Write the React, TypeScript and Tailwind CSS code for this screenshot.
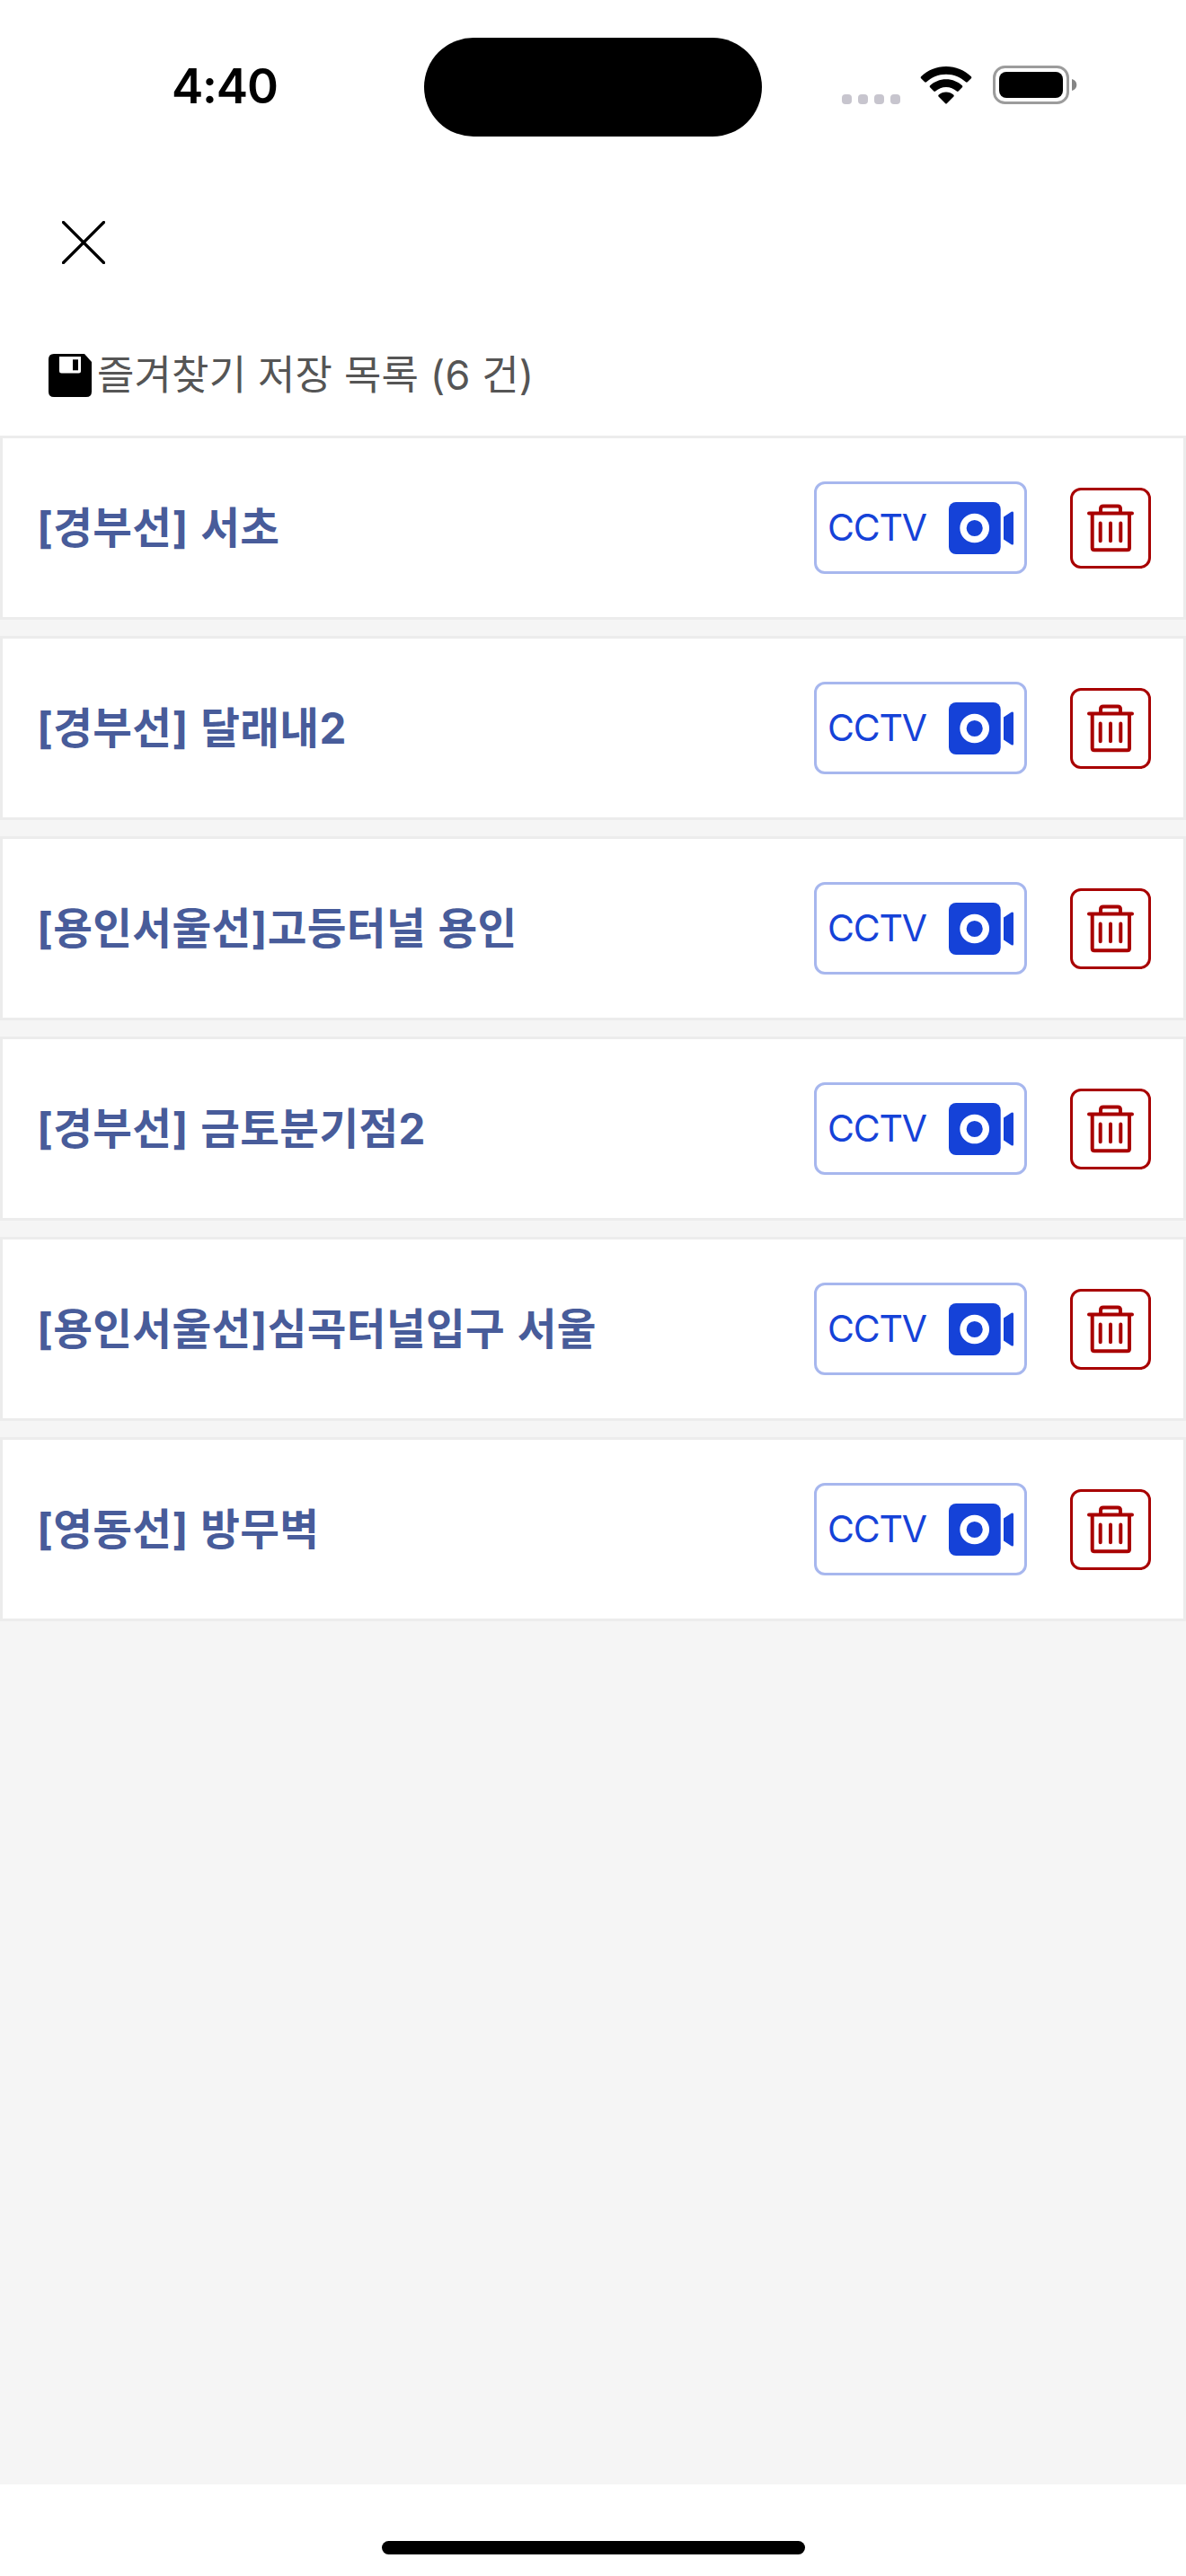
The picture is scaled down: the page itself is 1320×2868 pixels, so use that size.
import React, { useState } from 'react';

interface Favorite {
  id: number;
  name: string;
}

const initialFavorites: Favorite[] = [
  { id: 1, name: '[경부선] 서초' },
  { id: 2, name: '[경부선] 달래내2' },
  { id: 3, name: '[용인서울선]고등터널 용인' },
  { id: 4, name: '[경부선] 금토분기점2' },
  { id: 5, name: '[용인서울선]심곡터널입구 서울' },
  { id: 6, name: '[영동선] 방무벽' },
];

function WifiIcon() {
  return (
    <svg width="58" height="42" viewBox="0 0 58 42" fill="currentColor">
      <path d="M29 0C39.800 0 49.600 4.200 56.900 11.200Q57.900 12.200 56.900 13.200L52.800 17.300Q51.900 18.200 50.900 17.300C45.200 11.900 37.500 8.700 29 8.700S12.800 11.900 7.100 17.300Q6.100 18.200 5.200 17.300L1.100 13.200Q.1 12.200 1.100 11.200C8.400 4.200 18.200 0 29 0Z" />
      <path d="M29 14.300C36 14.300 42.200 17 46.900 21.300Q47.900 22.300 46.900 23.300L42.700 27.500Q41.800 28.300 40.800 27.500C37.700 24.600 33.500 22.900 29 22.900S20.300 24.600 17.200 27.500Q16.200 28.300 15.300 27.500L11.100 23.300Q10.100 22.300 11.100 21.300C15.800 17 22 14.300 29 14.300Z" />
      <path d="M29 28.600C32.200 28.600 35 29.700 37.200 31.600Q38.300 32.600 37.200 33.700L30 41.100Q29 42.100 28 41.100L20.800 33.700Q19.700 32.600 20.800 31.600C23 29.700 25.800 28.600 29 28.600Z" />
    </svg>
  );
}

function BatteryIcon() {
  return (
    <svg width="94" height="43" viewBox="0 0 94 43" fill="none">
      <rect x="1.500" y="1.500" width="82" height="40" rx="12" stroke="#9c9c9c" strokeWidth="3" />
      <rect x="7" y="7" width="71" height="29" rx="8" fill="#000" />
      <path d="M88 15C91.500 16 93.300 18.500 93.300 21.500S91.500 27 88 28Z" fill="#858585" />
    </svg>
  );
}

function SaveIcon() {
  return (
    <svg width="48" height="48" viewBox="0 0 48 48">
      <path d="M6 0H40L48 9V42Q48 48 42 48H6Q0 48 0 42V6Q0 0 6 0Z" fill="#000" />
      <path d="M12 3H36V19Q36 21.500 33.500 21.500H14.500Q12 21.500 12 19Z" fill="#fff" />
      <rect x="27" y="6.300" width="6" height="12" fill="#000" />
    </svg>
  );
}

function CameraIcon() {
  return (
    <svg width="72" height="58" viewBox="0 0 72 58" fill="currentColor">
      <rect width="57.700" height="58" rx="8" />
      <circle cx="28.700" cy="29" r="12.700" stroke="#fff" strokeWidth="7.300" />
      <path d="M61 16.600L69.700 10.800Q72 9.600 72 12V46Q72 48.400 69.700 47.200L61 41.500Z" />
    </svg>
  );
}

function TrashIcon() {
  return (
    <svg width="52" height="54" viewBox="19 18.500 52 54" fill="none" stroke="currentColor" strokeWidth="4" strokeLinecap="round" strokeLinejoin="round">
      <path d="M21 29H69" />
      <path d="M34 28V24Q34 21 37 21H53Q56 21 56 24V28" />
      <path d="M24.700 30V67.500Q24.700 69.700 27 69.700H63.700Q66 69.700 66 67.500V30" />
      <path d="M33.700 40V59.700M45 40V59.700M56.300 40V59.700" />
    </svg>
  );
}

function StatusBar() {
  return (
    <div className="flex h-[194px] items-start">
      <div className="w-[472px] pt-[64px] pl-[191px] text-[53px] leading-[64px] font-semibold tracking-[-1.2px] text-black">
        4:40
      </div>
      <div className="mt-[42px] h-[110px] w-[376px] rounded-full bg-black" />
      <div className="mt-[73px] ml-[89px] flex items-end">
        <div className="flex gap-[7px]">
          {[0, 1, 2, 3].map((dot) => (
            <div key={dot} className="h-[11px] w-[11px] rounded-[4px] bg-[#c7c5ce]" />
          ))}
        </div>
        <div className="ml-[22px]">
          <WifiIcon />
        </div>
        <div className="ml-[23px]">
          <BatteryIcon />
        </div>
      </div>
    </div>
  );
}

interface FavoriteRowProps {
  favorite: Favorite;
  onDelete: (id: number) => void;
}

function FavoriteRow({ favorite, onDelete }: FavoriteRowProps) {
  return (
    <li className="flex h-[205px] items-center border-[3px] border-[#ececec] bg-white pr-9 pl-[38px]">
      <p className="flex-1 text-[47.500px] leading-[60px] font-bold tracking-[0.35px] [word-spacing:2px] whitespace-nowrap text-[#485c9a]">
        {favorite.name}
      </p>
      <button className="flex h-[103px] w-[237px] items-center justify-between rounded-[12px] border-[3px] border-[#a7b7ee] px-3 text-[#1542d8]">
        <span className="text-[41px] leading-none tracking-[-1.2px]">CCTV</span>
        <CameraIcon />
      </button>
      <button
        onClick={() => onDelete(favorite.id)}
        className="ml-12 flex h-[90px] w-[90px] items-center justify-center rounded-[12px] border-[3px] border-[#a80000] text-[#a80000]"
      >
        <TrashIcon />
      </button>
    </li>
  );
}

export default function App() {
  const [favorites, setFavorites] = useState<Favorite[]>(initialFavorites);

  const handleDelete = (id: number) => {
    setFavorites(favorites.filter((favorite) => favorite.id !== id));
  };

  return (
    <div className="flex h-[2868px] w-[1320px] flex-col bg-white font-[Inter,'Noto_Sans_CJK_KR',sans-serif]">
      <StatusBar />

      {/* Close button */}
      <div className="flex h-[152px] items-center pl-[69px]">
        <button>
          <svg width="48" height="48" viewBox="0 0 48 48" stroke="#000" strokeWidth="3.300" strokeLinecap="round">
            <path d="M1.500 1.500L46.500 46.500M46.500 1.500L1.500 46.500" />
          </svg>
        </button>
      </div>

      <div className="flex h-[139px] items-center pt-1 pl-[54px]">
        <SaveIcon />
        <h1 className="mt-px ml-[6px] text-[45px] leading-[56px] font-normal tracking-[0.15px] whitespace-nowrap text-[#555]">
          즐겨찾기 저장 목록 ({favorites.length} 건)
        </h1>
      </div>

      {/* Saved list */}
      <ul className="flex flex-1 flex-col gap-[18px] bg-[#f5f5f5]">
        {favorites.map((favorite) => (
          <FavoriteRow key={favorite.id} favorite={favorite} onDelete={handleDelete} />
        ))}
      </ul>

      {/* Home indicator */}
      <div className="flex h-[102px] justify-center bg-white pt-[63px]">
        <div className="h-[15px] w-[471px] rounded-full bg-black" />
      </div>
    </div>
  );
}
